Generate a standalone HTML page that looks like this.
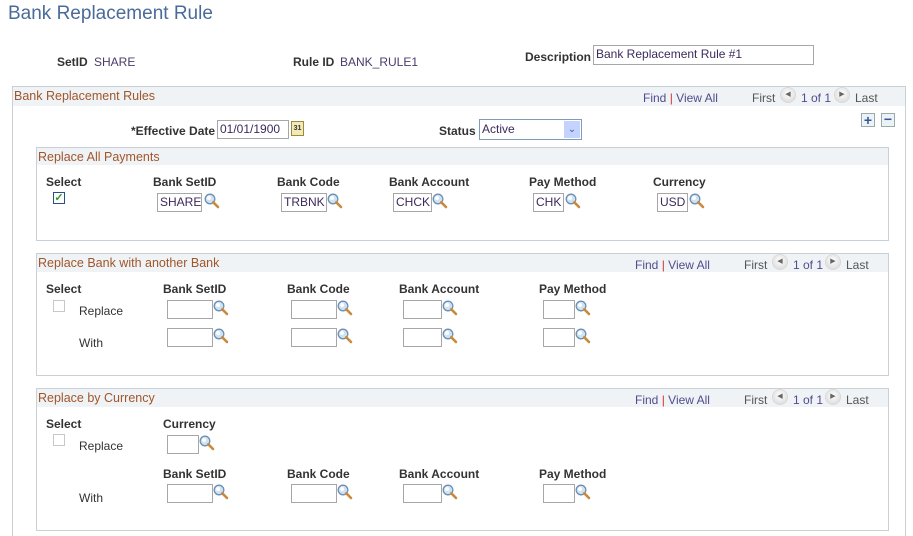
<!DOCTYPE html>
<html><head><style>
html,body{margin:0;width:913px;height:536px;overflow:hidden}
body{background:#fff;font-family:"Liberation Sans",Arial,sans-serif;font-size:12px;color:#333;position:relative}
.a{position:absolute;white-space:nowrap}
.b{font-weight:bold;color:#333}
.v{color:#4a3b6b}
.in{position:absolute;border:1px solid #a7a7a7;background:#fff;box-sizing:border-box;height:19px;line-height:17px;padding-left:2px;color:#3c2a5c;font-size:12px}
.box{position:absolute;border:1px solid #c9d1d6;box-sizing:border-box}
.hd{position:absolute;left:0;right:0;top:0;background:#eff3f5;color:#a0562b;font-size:12.5px;padding-left:1px}
.lk{color:#514c8e}
.mg{position:absolute;width:16px;height:16px}
.cb{position:absolute;width:12px;height:12px;border:1px solid #c8c8c8;box-sizing:border-box;background:#fff}
.nav{position:absolute;width:14px;height:14px;border-radius:50%;background:radial-gradient(circle at 50% 40%,#fff,#d4d4d4);box-shadow:0 0 0 1px #d8d8d8;color:#666;font-size:7px;line-height:14px;text-align:center}
</style></head><body>
<svg width="0" height="0" style="position:absolute"><defs>
<symbol id="m" viewBox="0 0 16 16"><circle cx="6" cy="6" r="4.8" fill="#cfe3f5" stroke="#6d8fb3" stroke-width="1.3"/><circle cx="5" cy="5" r="2" fill="#fff"/><path d="M9.3 9.3 L14 14" stroke="#c98a3c" stroke-width="2.6" stroke-linecap="round"/></symbol>
</defs></svg>

<div class="a" style="left:8px;top:3px;font-size:19px;color:#4a6b9a">Bank Replacement Rule</div>
<div class="a b" style="left:57px;top:55px">SetID</div><div class="a v" style="left:94px;top:55px">SHARE</div>
<div class="a b" style="left:293px;top:55px">Rule ID</div><div class="a v" style="left:340px;top:55px">BANK_RULE1</div>
<div class="a b" style="left:525px;top:50px">Description</div>
<div class="in" style="left:593px;top:45px;width:221px;height:20px">Bank Replacement Rule #1</div>

<div class="box" style="left:12px;top:86px;width:894px;height:460px">
 <div class="hd" style="height:19px;line-height:19px">Bank Replacement Rules</div>
</div>
<div class="a" style="left:643px;top:91px"><span class="lk">Find</span> <span style="color:#c33">|</span> <span class="lk">View All</span></div>
<div class="a" style="left:752px;top:91px;color:#555">First</div><div class="nav" style="left:781px;top:88px">&#9664;</div>
<div class="a" style="left:801px;top:91px;color:#514c8e">1 of 1</div><div class="nav" style="left:835px;top:88px">&#9654;</div>
<div class="a" style="left:855px;top:91px;color:#555">Last</div>

<div class="a b" style="left:131px;top:124px">*Effective Date</div>
<div class="in" style="left:217px;top:120px;width:72px">01/01/1900</div>
<div class="a" style="left:291px;top:121px;width:11px;height:13px;background:#f3e9b5;border:1px solid #9a8a40;font-size:7px;line-height:13px;text-align:center;font-weight:bold">31</div>
<div class="a b" style="left:439px;top:124px">Status</div>
<div class="in" style="left:479px;top:119px;width:103px;height:21px;line-height:19px;border-color:#7f9db9">Active<span style="position:absolute;right:1px;top:1px;width:16px;height:17px;background:#c3d3fd;color:#4d6185;font-size:10px;text-align:center;line-height:17px">&#8964;</span></div>
<div class="a" style="left:861px;top:113px;width:12px;height:12px;border:1px solid #9aa;background:#eef2f6;color:#2a5a9a;font-weight:bold;line-height:12px;text-align:center;font-size:14px">+</div>
<div class="a" style="left:881px;top:113px;width:12px;height:12px;border:1px solid #9aa;background:#eef2f6;color:#2a5a9a;font-weight:bold;line-height:11px;text-align:center;font-size:14px">&minus;</div>

<div class="box" style="left:36px;top:147px;width:853px;height:94px"><div class="hd" style="height:17px;line-height:18px">Replace All Payments</div></div>
<div class="a b" style="left:46px;top:175px">Select</div>
<div class="a b" style="left:153px;top:175px">Bank SetID</div>
<div class="a b" style="left:277px;top:175px">Bank Code</div>
<div class="a b" style="left:389px;top:175px">Bank Account</div>
<div class="a b" style="left:529px;top:175px">Pay Method</div>
<div class="a b" style="left:653px;top:175px">Currency</div>
<div class="cb" style="left:53px;top:192px;border-color:#2a5080;color:#2e9a2e;font-size:11px;line-height:10px;text-align:center;font-weight:bold">&#10003;</div>
<div class="in" style="left:157px;top:193px;width:45px">SHARE</div><svg class="mg" style="left:204px;top:193px"><use href="#m"/></svg>
<div class="in" style="left:281px;top:193px;width:46px">TRBNK</div><svg class="mg" style="left:327px;top:193px"><use href="#m"/></svg>
<div class="in" style="left:393px;top:193px;width:39px">CHCK</div><svg class="mg" style="left:432px;top:193px"><use href="#m"/></svg>
<div class="in" style="left:533px;top:193px;width:31px">CHK</div><svg class="mg" style="left:565px;top:193px"><use href="#m"/></svg>
<div class="in" style="left:657px;top:193px;width:31px">USD</div><svg class="mg" style="left:689px;top:193px"><use href="#m"/></svg>

<div class="box" style="left:36px;top:253px;width:853px;height:123px"><div class="hd" style="height:18px;line-height:18px">Replace Bank with another Bank</div></div>
<div class="a" style="left:635px;top:258px"><span class="lk">Find</span> <span style="color:#c33">|</span> <span class="lk">View All</span></div>
<div class="a" style="left:744px;top:258px;color:#555">First</div><div class="nav" style="left:773px;top:255px">&#9664;</div>
<div class="a" style="left:793px;top:258px;color:#514c8e">1 of 1</div><div class="nav" style="left:826px;top:255px">&#9654;</div>
<div class="a" style="left:846px;top:258px;color:#555">Last</div>
<div class="a b" style="left:46px;top:282px">Select</div>
<div class="a b" style="left:163px;top:282px">Bank SetID</div>
<div class="a b" style="left:287px;top:282px">Bank Code</div>
<div class="a b" style="left:399px;top:282px">Bank Account</div>
<div class="a b" style="left:539px;top:282px">Pay Method</div>
<div class="cb" style="left:53px;top:300px"></div>
<div class="a" style="left:79px;top:304px">Replace</div>
<div class="a" style="left:79px;top:336px">With</div>
<div class="in" style="left:167px;top:300px;width:46px"></div><svg class="mg" style="left:213px;top:300px"><use href="#m"/></svg>
<div class="in" style="left:291px;top:300px;width:46px"></div><svg class="mg" style="left:337px;top:300px"><use href="#m"/></svg>
<div class="in" style="left:403px;top:300px;width:39px"></div><svg class="mg" style="left:442px;top:300px"><use href="#m"/></svg>
<div class="in" style="left:543px;top:300px;width:32px"></div><svg class="mg" style="left:575px;top:300px"><use href="#m"/></svg>
<div class="in" style="left:167px;top:328px;width:46px"></div><svg class="mg" style="left:213px;top:328px"><use href="#m"/></svg>
<div class="in" style="left:291px;top:328px;width:46px"></div><svg class="mg" style="left:337px;top:328px"><use href="#m"/></svg>
<div class="in" style="left:403px;top:328px;width:39px"></div><svg class="mg" style="left:442px;top:328px"><use href="#m"/></svg>
<div class="in" style="left:543px;top:328px;width:32px"></div><svg class="mg" style="left:575px;top:328px"><use href="#m"/></svg>

<div class="box" style="left:36px;top:388px;width:853px;height:143px"><div class="hd" style="height:18px;line-height:18px">Replace by Currency</div></div>
<div class="a" style="left:635px;top:393px"><span class="lk">Find</span> <span style="color:#c33">|</span> <span class="lk">View All</span></div>
<div class="a" style="left:744px;top:393px;color:#555">First</div><div class="nav" style="left:773px;top:390px">&#9664;</div>
<div class="a" style="left:793px;top:393px;color:#514c8e">1 of 1</div><div class="nav" style="left:826px;top:390px">&#9654;</div>
<div class="a" style="left:846px;top:393px;color:#555">Last</div>
<div class="a b" style="left:46px;top:417px">Select</div>
<div class="a b" style="left:163px;top:417px">Currency</div>
<div class="cb" style="left:53px;top:434px"></div>
<div class="a" style="left:79px;top:439px">Replace</div>
<div class="in" style="left:167px;top:435px;width:32px"></div><svg class="mg" style="left:199px;top:435px"><use href="#m"/></svg>
<div class="a b" style="left:163px;top:467px">Bank SetID</div>
<div class="a b" style="left:287px;top:467px">Bank Code</div>
<div class="a b" style="left:399px;top:467px">Bank Account</div>
<div class="a b" style="left:539px;top:467px">Pay Method</div>
<div class="a" style="left:79px;top:491px">With</div>
<div class="in" style="left:167px;top:484px;width:46px"></div><svg class="mg" style="left:213px;top:484px"><use href="#m"/></svg>
<div class="in" style="left:291px;top:484px;width:46px"></div><svg class="mg" style="left:337px;top:484px"><use href="#m"/></svg>
<div class="in" style="left:403px;top:484px;width:39px"></div><svg class="mg" style="left:442px;top:484px"><use href="#m"/></svg>
<div class="in" style="left:543px;top:484px;width:32px"></div><svg class="mg" style="left:575px;top:484px"><use href="#m"/></svg>
</body></html>
